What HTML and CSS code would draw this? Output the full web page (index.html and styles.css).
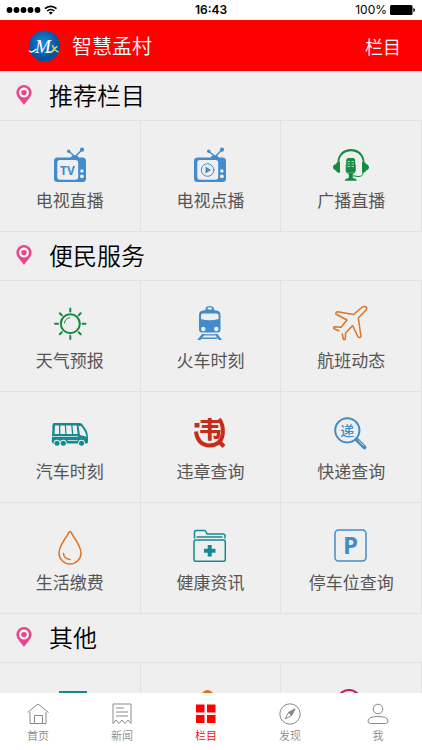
FILE: index.html
```html
<!DOCTYPE html>
<html lang="zh-CN">
<head>
<meta charset="utf-8">
<meta name="viewport" content="width=device-width, initial-scale=1">
<title>智慧孟村</title>
<link rel="stylesheet" href="styles.css">
</head>
<body>
<svg class="defs" aria-hidden="true">
  <symbol id="pin" viewBox="0 0 16 20"><path fill-rule="evenodd" d="M8 0a7.6 7.6 0 0 1 7.6 7.6C15.600 12 11 15.500 8 20 5 15.500.4 12 .4 7.600A7.600 7.600 0 0 1 8 0zM8 2.600a5 5 0 1 0 0 10 5 5 0 0 0 0-10z"/><circle cx="8" cy="7.600" r="2.700"/></symbol>
  <symbol id="tv" viewBox="0 0 36 36"><path fill-rule="evenodd" d="M5.500 10.500h13a4.500 3.500 0 0 1 8.500 0h3.500a3.500 3.500 0 0 1 3.500 3.500v17.500a3.500 3.500 0 0 1-3.500 3.500h-25a3.500 3.500 0 0 1-3.500-3.500V14a3.500 3.500 0 0 1 3.500-3.500zM8 13a2.700 2.700 0 0 0-2.700 2.700V30A2.700 2.700 0 0 0 8 32.700h15.500A2.700 2.700 0 0 0 26.200 30V15.700A2.700 2.700 0 0 0 23.500 13z"/><path class="line" d="M16.700 4.300l5.300 4.500M30 2.700l-6 6"/><circle cx="16.700" cy="4.300" r="1.700"/><circle cx="30" cy="2.700" r="2.100"/><circle class="hole" cx="29.900" cy="24" r="1.700"/><circle class="hole" cx="29.900" cy="29.300" r="1.900"/></symbol>
</svg>

<div class="app">
  <div class="status">
    <svg class="signal" width="52" height="12" viewBox="0 0 52 12" role="img" aria-label="信号"><circle cx="3.500" cy="6" r="2.900"/><circle cx="10.500" cy="6" r="2.900"/><circle cx="17.500" cy="6" r="2.900"/><circle cx="24.500" cy="6" r="2.900"/><circle cx="31.500" cy="6" r="2.900"/><g fill="none" stroke="#000" stroke-width="1.700"><path d="M39 4.600a8.300 8.300 0 0 1 11.500 0M41.200 7a5.200 5.200 0 0 1 7.100 0"/></g><path d="M42.800 8.600a3 3 0 0 1 4 0l-2 2.200z"/></svg>
    <span class="time">16:43</span>
    <span class="power">100% <svg width="26" height="10" viewBox="0 0 26 10" role="img" aria-label="电量"><rect width="22.500" height="10" rx="1.500"/><path d="M23.300 3q1.700.4 1.700 2t-1.700 2z"/></svg></span>
  </div>

  <header class="header">
    <svg class="logo" width="32" height="32" viewBox="0 0 32 32" role="img" aria-label="孟村">
      <defs><radialGradient id="globe" cx=".45" cy=".4"><stop offset="0" stop-color="#1b86d8"/><stop offset="1" stop-color="#07529f"/></radialGradient></defs>
      <circle cx="16.500" cy="16" r="15.500" fill="url(#globe)"/>
      <text class="logo-letter" x="7" y="22.500">M</text>
      <path d="M1 20.500q2 3.500 7.500-1.500M20 22q3 1 6-2" fill="none" stroke="#fff" stroke-width="1.400"/>
      <path d="M24.500 15q1 5 6 7M29.500 16.500q-3 1-6 6" fill="none" stroke="#c8dc3c" stroke-width="1.400"/>
    </svg>
    <h1>智慧孟村</h1>
    <a class="header-link" href="#columns">栏目</a>
  </header>

  <main class="content" id="columns">
    <section>
      <h2><svg class="pin" width="16" height="20"><use href="#pin"/></svg>推荐栏目</h2>
      <div class="grid">
        <a class="cell blue" href="#tv-live"><svg class="icon" viewBox="0 0 36 36"><use href="#tv"/><text class="tv-text" x="8" y="27.500">TV</text></svg>电视直播</a>
        <a class="cell blue" href="#tv-vod"><svg class="icon" viewBox="0 0 36 36"><use href="#tv"/><circle class="thin" cx="15.600" cy="23" r="6.300"/><path d="M13.500 19.500l5.500 3.500-5.500 3.500z"/></svg>电视点播</a>
        <a class="cell green" href="#radio"><svg class="icon" viewBox="0 0 36 36"><path d="M4.500 15C4.800-2.500 31.200-2.500 31.500 15h-1.700C28.800.8 7.200.8 6.200 15z"/><path d="M7 14.800v10.900q-3.500.3-4-2.200Q0 22.700 0 20.300T3 17q.5-2.500 4-2.200zM29 14.800v10.900q3.500.3 4-2.200 3-.8 3-3.200T33 17q-.5-2.500-4-2.200z"/><rect x="13.200" y="11" width="9" height="14.700" rx="2.500"/><path d="M14.500 14.500h2.500M18.500 14.500h2.500M14.500 17h2.500M18.500 17h2.500M14.500 19.500h2.500M18.500 19.500h2.500" stroke="#efefef" stroke-width=".7"/><path class="thin" d="M13.200 18v5q0 4 4.500 4t4.500-4v-5M30 26q0 3.700-5 3.500l-5-.7"/><path d="M15.800 26h4v5q4 .7 4 2.700h-12q0-2 4-2.700z"/></svg>广播直播</a>
      </div>
    </section>

    <section>
      <h2><svg class="pin" width="16" height="20"><use href="#pin"/></svg>便民服务</h2>
      <div class="grid">
        <a class="cell green" href="#weather"><svg class="icon bold" viewBox="0 0 36 36"><circle class="line" cx="18.300" cy="16.700" r="9.500"/><path class="line" d="M18.300 1.500v3M18.300 29v3M3 16.700h3M30.500 16.700h3M7.800 6.300l2 2M26.700 25.200l2 2M28.700 6.300l-2 2M9.800 25.200l-2 2"/><path class="thin" d="M12.500 16q.5-4.500 5-5.300"/></svg>天气预报</a>
        <a class="cell blue" href="#train"><svg class="icon" viewBox="0 0 36 36"><path fill-rule="evenodd" d="M13.500 3V1.500Q14-1 17.800-1T22 1.500V3l3.500.7q3 .8 3 4.300v14.500q0 3-3 3H10q-3 0-3-3V8q0-3.500 3-4.300zM15.700 2.500h4.200V1q-.3-.7-2.100-.7t-2.100.7zM11 6.500q-2 0-2 2V12q8 2.500 17.600 0V8.500q0-2-2-2z"/><circle class="hole" cx="11.300" cy="22" r="2.200"/><circle class="hole" cx="24.300" cy="22" r="2.200"/><path d="M10 27h3l-4.500 6H5.300zM22.500 27h3l4.500 6h-3.200zM12.500 27.300h10.500v1.300H12zM10.500 30.500h14.500v1.500H9.500z"/></svg>火车时刻</a>
        <a class="cell orange" href="#flight"><svg class="icon" viewBox="0 0 36 36"><path class="line" d="M9.300 27l1 5q1.500 1.500 2-.5l.3-5.500 7-7.500L25 30q2 1.500 3-.7L25.300 11l7.800-8Q34.500.5 33 0q-2-1.200-4.200.5L20.600 7.500 4.500 4.800Q2.700 5.200 2.800 7L14 13l-6 7.300-6.500-.6Q-.2 20.500 1 21.700l4.800 2"/></svg>航班动态</a>
        <a class="cell teal" href="#bus"><svg class="icon" viewBox="0 0 36 36"><path fill-rule="evenodd" d="M2 5h26q2 0 3.500 3 4.500 5 4.500 12v4q0 1.500-2 1.500H1.500Q-.2 25.500-.2 23L.5 7Q.7 5 2 5zM3 7.500L2.500 16H7V7.500zM8.300 7.500V16h5l-.5-8.500zM14 7.500l.5 8.500H20l-.8-8.500zM20.500 7.500l.8 8.500h4.200l-.8-8.500zM26.500 8l1.500 9 6.500 1.700Q33.500 13 29 8zM0 18.200v.8h26v-.8z"/><g fill="#efefef"><circle cx="5" cy="25" r="3.300"/><circle cx="11.300" cy="25" r="3.300"/><circle cx="29.500" cy="25" r="3.300"/><path d="M15.500 22h10v.8h-10z"/></g><circle cx="5" cy="25.300" r="2.500"/><circle cx="11.300" cy="25.300" r="2.500"/><circle cx="29.500" cy="25.300" r="2.500"/></svg>汽车时刻</a>
        <a class="cell red" href="#violations"><svg class="icon" viewBox="0 0 36 36"><path d="M2.500 5h5v4.500h-5z"/><path d="M4 13.500Q5.500 27 17.500 27.500 29.500 27 30.800 15.500 31.500 6.500 27 1M27.500 24l4.500 4.500" fill="none" stroke="currentColor" stroke-width="4"/><text class="glyph-heavy" x="6.500" y="19.500">韦</text></svg>违章查询</a>
        <a class="cell blue" href="#express"><svg class="icon" viewBox="0 0 36 36"><circle class="line heavy" cx="14.300" cy="12.300" r="12.100"/><path d="M23.500 21.300l8 8" fill="none" stroke="currentColor" stroke-width="4" stroke-linecap="round"/><path d="M25.500 22.500l5.500 5.500" stroke="#efefef" stroke-width=".7"/><text class="glyph" x="7.300" y="17.500">递</text></svg>快递查询</a>
        <a class="cell orange" href="#bills"><svg class="icon" viewBox="0 0 36 36"><path class="line" d="M18 2.500Q16.500 3 15.500 6 7 18 7 24a11 11 0 0 0 22 0Q29 18 20.500 6 19.500 3 18 2.500zM11.500 24.500q.5 5.500 6.500 6"/></svg>生活缴费</a>
        <a class="cell teal" href="#health"><svg class="icon" viewBox="0 0 36 36"><path class="line" d="M2.500 9V3q0-1.500 1.500-1.500h8.500q1 0 1.500 1.200l1 2.300h16q2 0 2 2v2M5 8h25"/><rect class="line" x="2" y="11" width="31.300" height="21.300" rx="1.500"/><path d="M15.700 16h4v3.800h3.800v4h-3.800v3.800h-4v-3.800h-3.800v-4h3.800z"/></svg>健康资讯</a>
        <a class="cell blue" href="#parking"><svg class="icon" viewBox="0 0 36 36"><rect class="line" x="2" y="1" width="31" height="31" rx="3.500"/><text class="parking-text" x="10" y="24.500">P</text></svg>停车位查询</a>
      </div>
    </section>

    <section>
      <h2><svg class="pin" width="16" height="20"><use href="#pin"/></svg>其他</h2>
      <div class="grid">
        <a class="cell teal" href="#more-1" aria-label="其他一"><svg class="icon" viewBox="0 0 36 36"><rect x="7" y="2" width="28" height="24"/></svg></a>
        <a class="cell orange" href="#more-2" aria-label="其他二"><svg class="icon" viewBox="0 0 36 36"><circle cx="15.500" cy="7" r="6"/></svg></a>
        <a class="cell crimson" href="#more-3" aria-label="其他三"><svg class="icon" viewBox="0 0 36 36"><circle class="line heavy" cx="16" cy="13" r="12"/></svg></a>
      </div>
    </section>
  </main>

  <nav class="tabs">
    <a class="tab" href="#home"><svg width="22" height="22" viewBox="0 0 22 22"><path d="M.5 9.500L11 1l10.500 8.500M3 9v11.500h4.500v-8h8v8H19V9M7.500 20.500h8"/></svg>首页</a>
    <a class="tab" href="#news"><svg width="22" height="22" viewBox="0 0 22 22"><path d="M2 1h18v19.500l-3-3.500-3 3.500-3-3.500-3 3.500L5 17l-3 3.500zM5 5h8M5 9h12M5 13h12"/></svg>新闻</a>
    <a class="tab active" href="#columns" aria-current="page"><svg width="22" height="22" viewBox="0 0 22 22"><path d="M1 1.500h8.500v8H1zM12 1.500h8.500v8H12zM1 12h8.500v8H1zM12 12h8.500v8H12z"/></svg>栏目</a>
    <a class="tab" href="#discover"><svg width="22" height="22" viewBox="0 0 22 22"><circle cx="11" cy="11" r="10.200"/><path d="M16 6l-3.500 6.500-3-3zM6 16l3.500-6.500 3 3z"/><path d="M16 6l-3.500 6.500-3-3z" fill="currentColor"/></svg>发现</a>
    <a class="tab" href="#me"><svg width="22" height="22" viewBox="0 0 22 22"><circle cx="11" cy="6" r="4.800"/><path d="M1 18q0-4.500 10-4.500T21 18q0 2.500-2.500 2.500h-15Q1 20.500 1 18z"/></svg>我</a>
  </nav>
</div>
</body>
</html>
```

FILE: styles.css
```css
* { box-sizing: border-box; }

body {
  margin: 0;
  background: #efefef;
  color: #000;
  font-family: "Noto Sans CJK SC", sans-serif;
  font-weight: 350;
}

a { color: inherit; text-decoration: none; }

.defs { display: none; }

.app {
  display: flex;
  flex-direction: column;
  height: 100vh;
}

.status {
  display: grid;
  grid-template-columns: 1fr auto 1fr;
  align-items: center;
  flex: none;
  height: 20px;
  padding: 0 6px;
  background: #fff;
  font: 12px/20px Inter, sans-serif;
}

.time { font-weight: 600; }

.power {
  display: flex;
  align-items: center;
  justify-content: flex-end;
  gap: 3px;
}

.header {
  display: flex;
  align-items: center;
  flex: none;
  height: 51px;
  padding: 0 21px 0 28px;
  background: #f00;
  color: #fff;
}

.logo-letter {
  fill: #fff;
  font: italic 400 19px "Liberation Serif", serif;
}

h1 {
  flex: 1;
  margin: 0 0 0 12px;
  font-size: 20px;
  font-weight: 350;
  line-height: 28px;
}

.header-link { font-size: 18px; line-height: 28px; }

.content {
  flex: 1;
  min-height: 0;
  overflow-y: auto;
  scrollbar-width: none;
}

h2 {
  display: flex;
  align-items: center;
  gap: 17px;
  height: 49px;
  margin: 0;
  padding: 0 16px 2px;
  border-top: 1px solid #e2e2e2;
  font-size: 24px;
  font-weight: 350;
  line-height: 32px;
}

.pin { fill: #e4488c; }

.grid {
  display: grid;
  grid-template-columns: repeat(3, 1fr);
}

.cell {
  display: flex;
  flex-direction: column;
  align-items: center;
  gap: 7px;
  height: 111px;
  padding-top: 26px;
  border-top: 1px solid #e2e2e2;
  border-right: 1px solid #e2e2e2;
  font-size: 17px;
  font-weight: 400;
  line-height: 20px;
  color: #555;
}

.icon {
  width: 36px;
  height: 36px;
  overflow: visible;
  fill: currentColor;
}

.blue .icon { color: #428ccb; }
.green .icon { color: #178a42; }
.orange .icon { color: #dc7426; }
.teal .icon { color: #138a91; }
.red .icon { color: #c72c18; }
.crimson .icon { color: #c0244c; }

.line, .thin {
  fill: none;
  stroke: currentColor;
  stroke-width: 1.5px;
  stroke-linecap: round;
  stroke-linejoin: round;
}

.thin { stroke-width: 1px; }
.heavy, .bold .line { stroke-width: 2px; }
.hole { fill: #efefef; }

.tv-text { font: 700 12px "Open Sans", sans-serif; }
.parking-text { font: 700 24px "Open Sans", sans-serif; }
.glyph { font: 500 14px "Noto Sans CJK SC", sans-serif; }
.glyph-heavy { font: 900 23px "Noto Sans CJK SC", sans-serif; }

.tabs {
  display: grid;
  grid-template-columns: 84fr 84fr 84fr 88fr 55fr;
  justify-items: start;
  flex: none;
  height: 57px;
  padding: 10px 0 0 27px;
  background: #fff;
  color: #8a8a8a;
  font-size: 11px;
  line-height: 16px;
}

.tab {
  display: flex;
  flex-direction: column;
  align-items: center;
  gap: 2px;
}

.tab svg {
  fill: none;
  stroke: currentColor;
}

.active { color: #f00; }
.tab.active svg { fill: currentColor; stroke: none; }
```
